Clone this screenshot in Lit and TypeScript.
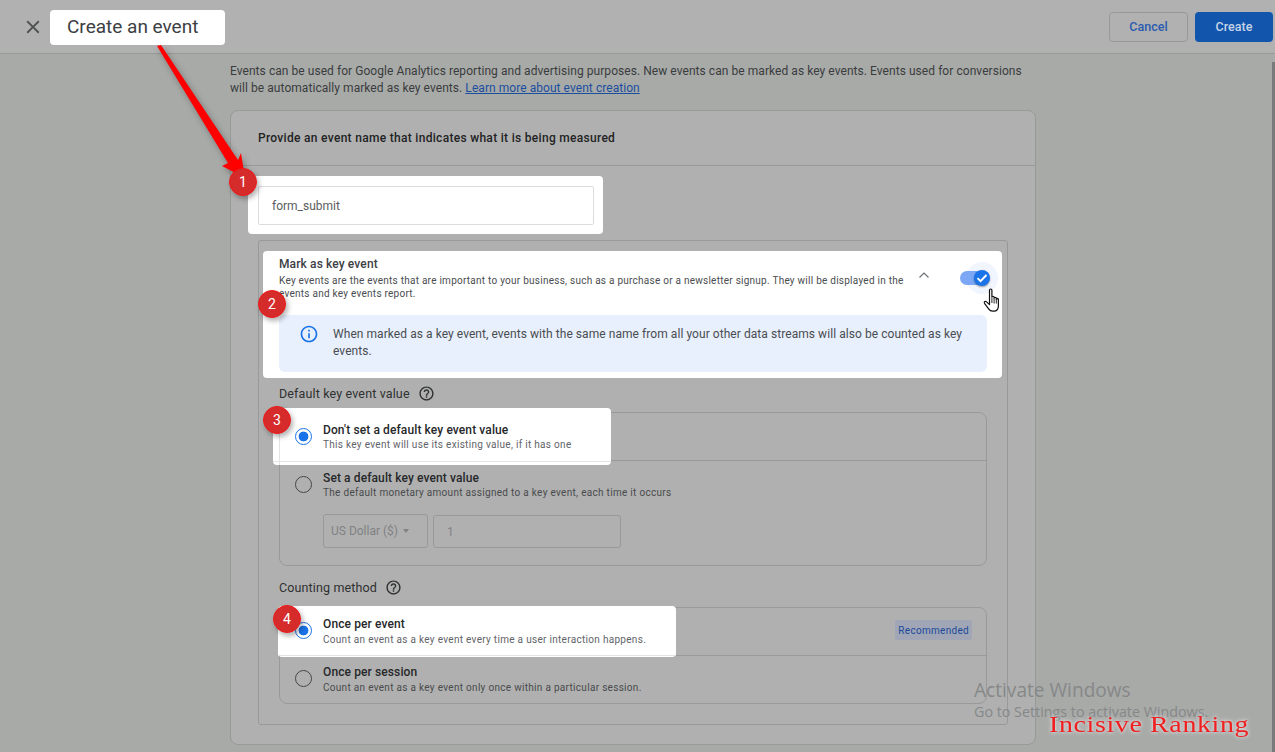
import { LitElement, html, css, svg } from "lit";
import { customElement } from "lit/decorators.js";

const HELP =
	"M11 18h2v-2h-2v2zm1-16C6.48 2 2 6.48 2 12s4.48 10 10 10 10-4.48 10-10S17.52 2 12 2zm0 18c-4.41 0-8-3.59-8-8s3.59-8 8-8 8 3.59 8 8-3.59 8-8 8zm0-14c-2.21 0-4 1.79-4 4h2c0-1.1.9-2 2-2s2 .9 2 2c0 2-3 1.75-3 5h2c0-2.25 3-2.5 3-5 0-2.21-1.79-4-4-4z";
const INFO =
	"M11 7h2v2h-2zm0 4h2v6h-2zm1-9C6.48 2 2 6.48 2 12s4.48 10 10 10 10-4.48 10-10S17.52 2 12 2zm0 18c-4.41 0-8-3.59-8-8s3.59-8 8-8 8 3.59 8 8-3.59 8-8 8z";
const CLOSE =
	"M19 6.41 17.59 5 12 10.59 6.41 5 5 6.41 10.59 12 5 17.59 6.41 19 12 13.41 17.59 19 19 17.59 13.41 12z";

@customElement("app-root")
export class AppRoot extends LitElement {
	static styles = css`
		:host {
			display: block;
			position: relative;
			width: 1275px;
			height: 752px;
			overflow: hidden;
			background: #a8aaa8;
			font-family: Roboto, "Liberation Sans", sans-serif;
			color: #2e2f30;
		}

		.topbar {
			display: flex;
			align-items: center;
			height: 53px;
			box-sizing: content-box;
			background: #b1b1b1;
			border-bottom: 1px solid #989a98;
			padding-left: 22px;
		}
		.close {
			width: 22px;
			height: 22px;
			fill: #4d4f50;
		}
		.title {
			display: flex;
			align-items: center;
			margin: 1px 0 0 6px;
			width: 175px;
			height: 35px;
			padding: 0 0 2px 17px;
			box-sizing: border-box;
			background: #fff;
			border-radius: 4px;
			font-size: 19px;
			color: #3c4043;
		}
		.actions {
			display: flex;
			gap: 7px;
			margin-left: auto;
			margin-right: 2px;
		}
		.btn {
			display: flex;
			align-items: center;
			justify-content: center;
			height: 30px;
			border-radius: 4px;
			box-sizing: border-box;
			font-size: 12.5px;
			font-weight: 500;
		}
		.btn.cancel {
			width: 79px;
			border: 1px solid #979999;
			color: #2a5cb0;
		}
		.btn.create {
			width: 78px;
			background: #1155ad;
			color: #c6d4e6;
		}

		.scrollbar {
			position: absolute;
			left: 1272px;
			top: 62px;
			width: 3px;
			height: 690px;
			background: #77797a;
		}

		main {
			width: 806px;
			margin-left: 230px;
			padding-top: 9px;
		}
		.intro {
			font-size: 12px;
			line-height: 17px;
			letter-spacing: 0.056px;
			color: #3a3c3d;
			width: 800px;
		}
		.intro a {
			color: #1c4e9e;
			text-decoration: underline;
		}

		.card {
			margin-top: 13px;
			height: 635px;
			box-sizing: border-box;
			background: #b0b0b0;
			border: 1px solid #989a9a;
			border-radius: 8px;
		}
		.card-head {
			display: flex;
			align-items: center;
			height: 54px;
			padding-left: 27px;
			border-bottom: 1px solid #989a9a;
			font-size: 12px;
			font-weight: 500;
			letter-spacing: 0.3px;
			color: #222324;
		}
		.card-body {
			padding: 10px 27px 0;
		}
		.name-hl {
			width: 355px;
			margin-left: -10px;
			padding: 10px 9px 9px 10px;
			box-sizing: border-box;
			background: #fff;
			border-radius: 4px;
		}
		.name-input {
			display: flex;
			align-items: center;
			height: 39px;
			padding-left: 13px;
			box-sizing: border-box;
			border: 1px solid #dadce0;
			border-radius: 2px;
			font-size: 12px;
			color: #5a5d60;
		}

		.panel {
			position: relative;
			margin-top: 6px;
			height: 485px;
			box-sizing: border-box;
			border: 1px solid #989a9a;
			border-radius: 3px;
			padding: 10px 20px 0;
		}
		.key {
			margin: 0 0 0 -16px;
			padding: 6px 15px 6px 16px;
			height: 127px;
			width: 739px;
			box-sizing: border-box;
			background: #fff;
			border-radius: 4px;
		}
		.key-head {
			display: flex;
			align-items: flex-start;
			isolation: isolate;
		}
		.key-text {
			width: 630px;
		}
		.key-title {
			font-size: 12px;
			line-height: 14px;
			font-weight: 500;
			letter-spacing: 0.12px;
			color: #3c4043;
		}
		.key-desc {
			margin-top: 3px;
			font-size: 10px;
			line-height: 13px;
			letter-spacing: 0.25px;
			color: #4a4d50;
		}
		.chevron {
			width: 12px;
			height: 8px;
			margin: 14px 0 0 9px;
			fill: none;
			stroke: #6b6e70;
			stroke-width: 1.1;
		}
		.toggle {
			position: relative;
			width: 25px;
			height: 14px;
			margin: 14px 0 0 30px;
			background: #7ba7f5;
			border-radius: 7px;
		}
		.toggle .halo {
			position: absolute;
			z-index: -1;
			left: 6px;
			top: -9px;
			width: 32px;
			height: 32px;
			border-radius: 50%;
			background: #f1f5fd;
		}
		.toggle .knob {
			position: absolute;
			left: 14px;
			top: -1px;
			width: 16px;
			height: 16px;
			border-radius: 50%;
			background: #1a73e8;
			box-shadow: 0 1px 2px rgba(0, 0, 0, 0.4);
		}
		.toggle svg {
			display: block;
			width: 16px;
			height: 16px;
			fill: none;
			stroke: #fff;
			stroke-width: 1.9;
		}
		.info {
			display: flex;
			gap: 14px;
			margin-top: 15px;
			height: 57px;
			padding: 9px 20px 0 20px;
			box-sizing: border-box;
			background: #e8f0fe;
			border-radius: 6px;
			font-size: 12px;
			line-height: 17px;
			letter-spacing: 0.06px;
			color: #4a4d50;
		}
		.info svg {
			flex: none;
			width: 20px;
			height: 20px;
			fill: #1a73e8;
		}
		.info div {
			margin-top: 2px;
		}

		.label {
			display: flex;
			align-items: center;
			gap: 8px;
			height: 18px;
			margin-top: 6px;
			font-size: 12.5px;
			letter-spacing: 0.14px;
			color: #2f3031;
		}
		.label svg {
			width: 17px;
			height: 17px;
			fill: #2f3031;
		}
		.label.second {
			margin-top: 12px;
		}
		.group {
			margin-top: 10px;
			border: 1px solid #989a9a;
			border-radius: 8px;
		}
		.label.second + .group {
			margin-top: 11px;
		}
		.row {
			position: relative;
			display: flex;
			height: 47px;
			box-sizing: border-box;
			padding: 10px 14px 0 15px;
		}
		.label.second + .group .row {
			padding-top: 9px;
		}
		.row.lit {
			z-index: 1;
		}
		.row + .row {
			border-top: 1px solid #989a9a;
			height: 48px;
		}
		.row.tall {
			height: 105px;
		}
		.hl {
			position: absolute;
			background: #fff;
			border-radius: 4px;
		}
		.hl.first {
			top: -5px;
			left: -7px;
			width: 338px;
			height: 57px;
		}
		.hl.first::before {
			content: "";
			position: absolute;
			left: 6px;
			top: 12px;
			bottom: 0;
			border-left: 1px solid #e2e3e4;
		}
		.hl.second {
			left: -2px;
			top: -2px;
			width: 398px;
			height: 51px;
		}
		.hl::after {
			content: "";
			position: absolute;
			left: 0;
			right: 0;
			bottom: 3px;
			border-bottom: 1px solid #e2e3e4;
		}
		.hl.second::after {
			bottom: 1px;
		}
		.radio,
		.row-text,
		.chip {
			position: relative;
		}
		.radio {
			flex: none;
			width: 17px;
			height: 17px;
			margin-top: 5px;
			box-sizing: border-box;
			border: 1px solid #444648;
			border-radius: 50%;
		}
		.radio.on {
			border-color: #1a73e8;
			background: radial-gradient(circle, #1a73e8 0 4.6px, #fff 5.2px);
		}
		.row-text {
			margin-left: 11px;
		}
		.row-title {
			font-size: 12px;
			line-height: 14px;
			font-weight: 500;
			letter-spacing: 0.11px;
			color: #26282a;
		}
		.row-sub {
			margin-top: 1px;
			font-size: 10px;
			line-height: 13px;
			letter-spacing: 0.3px;
			color: #494b4d;
		}
		.label.second + .group .row-sub {
			margin-top: 2px;
		}
		.row.lit .row-sub {
			color: #5f6368;
		}
		.chip {
			display: flex;
			align-items: center;
			margin: 3px 0 0 auto;
			height: 20px;
			padding: 0 3px;
			border-radius: 2px;
			background: #a0a6b6;
			color: #1c4a9a;
			font-size: 10px;
			letter-spacing: 0.3px;
		}
		.fields {
			display: flex;
			gap: 5px;
			margin-top: 15px;
		}
		.field {
			display: flex;
			align-items: center;
			height: 34px;
			box-sizing: border-box;
			border: 1px solid #98999a;
			border-radius: 3px;
			font-size: 12px;
			color: #808284;
		}
		.field.currency {
			width: 105px;
			padding-left: 7px;
			gap: 5px;
		}
		.field.currency i {
			border: 3.5px solid transparent;
			border-top: 4px solid #808284;
			border-bottom: 0;
		}
		.field.amount {
			width: 188px;
			margin-top: 1px;
			height: 33px;
			padding-left: 13px;
		}

		.arrow {
			position: absolute;
			z-index: 2;
			left: 0;
			top: 0;
			width: 300px;
			height: 200px;
			filter: drop-shadow(2px 3px 3px rgba(0, 0, 0, 0.3));
		}
		.step {
			position: absolute;
			z-index: 2;
			display: flex;
			align-items: center;
			justify-content: center;
			width: 28px;
			height: 28px;
			box-sizing: border-box;
			border: 1.5px solid #f01818;
			border-radius: 50%;
			background: #d62b2b;
			color: #fff;
			font-size: 14px;
			box-shadow: 2px 3px 5px rgba(0, 0, 0, 0.3);
		}
		.cursor {
			position: absolute;
			z-index: 2;
			left: 983px;
			top: 288px;
			width: 19px;
			height: 26px;
		}
		.activate {
			position: absolute;
			z-index: 2;
			left: 974px;
			top: 679px;
			font-family: "Open Sans", sans-serif;
			color: #868888;
			pointer-events: none;
		}
		.activate div:first-child {
			font-size: 19.1px;
			line-height: 22px;
		}
		.activate div:last-child {
			font-size: 14.3px;
			line-height: 20px;
			margin-top: 1px;
		}
		.brand {
			position: absolute;
			z-index: 2;
			left: 1049px;
			top: 710px;
			font-family: "Liberation Serif", serif;
			font-size: 24px;
			line-height: 28px;
			letter-spacing: 0.55px;
			color: #f02020;
			text-shadow: 0 0 3px #dcdcdc, 0 0 5px #dcdcdc;
			transform: scaleX(1.163);
			transform-origin: left center;
		}
	`;

	private help() {
		return html`<svg viewBox="0 0 24 24"><path d=${HELP}></path></svg>`;
	}

	private step(n: number, x: number, y: number) {
		return html`<div class="step" style="left:${x - 14}px;top:${y - 14}px">${n}</div>`;
	}

	render() {
		return html`
			<header class="topbar">
				<svg class="close" viewBox="0 0 24 24"><path d=${CLOSE}></path></svg>
				<div class="title">Create an event</div>
				<div class="actions">
					<div class="btn cancel">Cancel</div>
					<div class="btn create">Create</div>
				</div>
			</header>
			<div class="scrollbar"></div>

			<main>
				<div class="intro">
					Events can be used for Google Analytics reporting and advertising purposes. New events can
					be marked as key events. Events used for conversions will be automatically marked as key
					events. <a>Learn more about event creation</a>
				</div>

				<section class="card">
					<div class="card-head">Provide an event name that indicates what it is being measured</div>
					<div class="card-body">
						<div class="name-hl"><div class="name-input">form_submit</div></div>

						<div class="panel">
							<div class="key">
								<div class="key-head">
									<div class="key-text">
										<div class="key-title">Mark as key event</div>
										<div class="key-desc">
											Key events are the events that are important to your business, such as a
											purchase or a newsletter signup. They will be displayed in the events and key
											events report.
										</div>
									</div>
									<svg class="chevron" viewBox="0 0 12 8"><path d="M1.5 6.5 6 2l4.5 4.5"></path></svg>
									<div class="toggle">
										<div class="halo"></div>
										<div class="knob">
											<svg viewBox="0 0 16 16"><path d="M3.5 8.2l3 3L12.5 5"></path></svg>
										</div>
									</div>
								</div>
								<div class="info">
									<svg viewBox="0 0 24 24"><path d=${INFO}></path></svg>
									<div>
										When marked as a key event, events with the same name from all your other data
										streams will also be counted as key events.
									</div>
								</div>
							</div>

							<div class="label">Default key event value ${this.help()}</div>
							<div class="group">
								<div class="row lit">
									<div class="hl first"></div>
									<div class="radio on"></div>
									<div class="row-text">
										<div class="row-title">Don't set a default key event value</div>
										<div class="row-sub">This key event will use its existing value, if it has one</div>
									</div>
								</div>
								<div class="row tall">
									<div class="radio"></div>
									<div class="row-text">
										<div class="row-title">Set a default key event value</div>
										<div class="row-sub">
											The default monetary amount assigned to a key event, each time it occurs
										</div>
										<div class="fields">
											<div class="field currency">US Dollar ($) <i></i></div>
											<div class="field amount">1</div>
										</div>
									</div>
								</div>
							</div>

							<div class="label second">Counting method ${this.help()}</div>
							<div class="group">
								<div class="row lit">
									<div class="hl second"></div>
									<div class="radio on"></div>
									<div class="row-text">
										<div class="row-title">Once per event</div>
										<div class="row-sub">
											Count an event as a key event every time a user interaction happens.
										</div>
									</div>
									<div class="chip">Recommended</div>
								</div>
								<div class="row">
									<div class="radio"></div>
									<div class="row-text">
										<div class="row-title">Once per session</div>
										<div class="row-sub">
											Count an event as a key event only once within a particular session.
										</div>
									</div>
								</div>
							</div>
						</div>
					</div>
				</section>
			</main>

			<svg class="arrow" viewBox="0 0 300 200">
				${svg`<polygon fill="#ff0000" points="157,46 161,45 238,160 241,153 245,178 222,166 228,163"></polygon>`}
			</svg>
			${this.step(1, 243, 182)} ${this.step(2, 272, 304)} ${this.step(3, 277, 420)}
			${this.step(4, 287, 619)}

			<svg class="cursor" viewBox="0 0 19 26">
				<path
					fill="#fff"
					stroke="#111"
					stroke-width="1.2"
					stroke-linejoin="round"
					d="M6.5 2.2c0-1.6 2.4-1.6 2.4 0v7c0-1.3 2.2-1.3 2.2 0v1c0-1.2 2.2-1.2 2.2 0v1c0-1.1 2.1-1 2.1.2v6.4c0 3-1.4 5.4-4.6 5.4H9.6c-2 0-3-.9-4-2.4L1.5 15.3c-.9-1.5 1-2.6 2.1-1.4l2.9 2.7z"
				></path>
				<path stroke="#111" stroke-width="0.9" d="M8.9 10v5M11.1 10.5v5M13.3 11.2v4.4"></path>
			</svg>

			<div class="activate">
				<div>Activate Windows</div>
				<div>Go to Settings to activate Windows.</div>
			</div>
			<div class="brand">Incisive Ranking</div>
		`;
	}
}
